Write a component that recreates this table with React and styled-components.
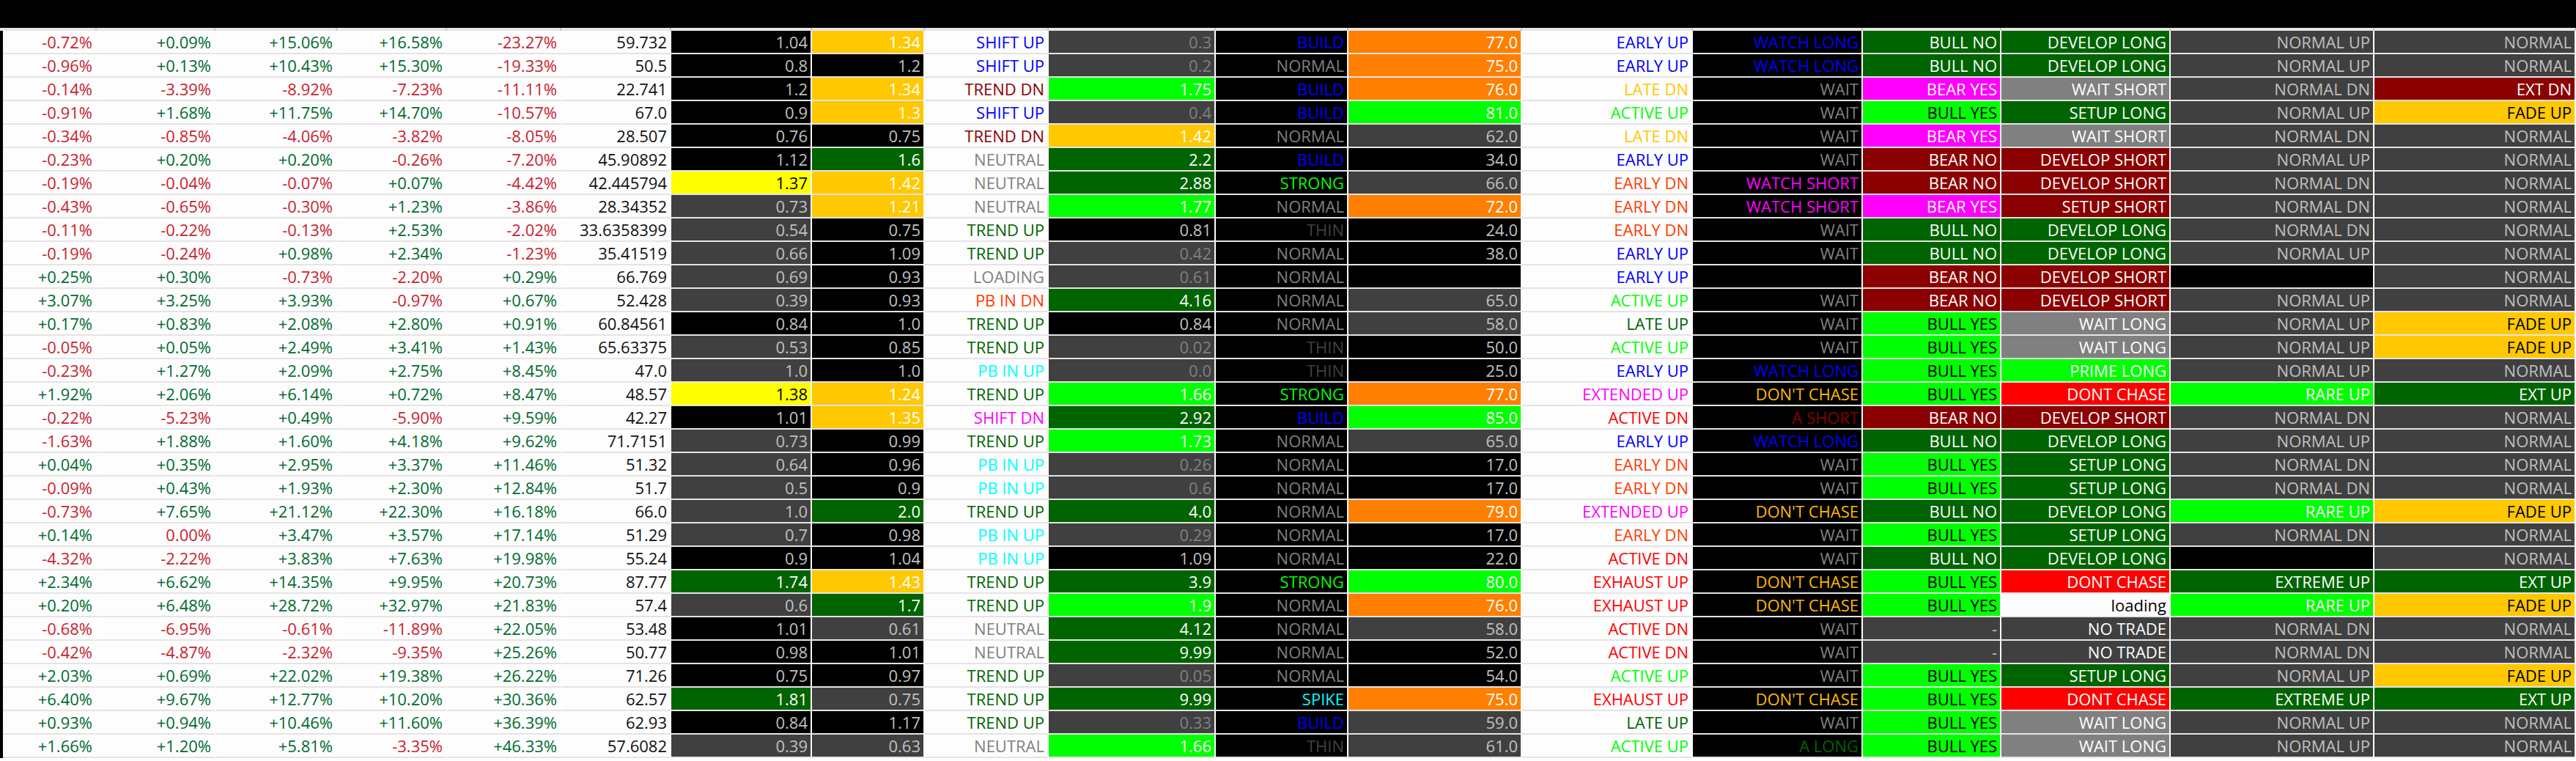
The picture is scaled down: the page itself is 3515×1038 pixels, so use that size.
import styled, { createGlobalStyle } from 'styled-components'

const GlobalStyle = createGlobalStyle`
  body {
    margin: 0;
    background: #fdfdfd;
    font-family: "Open Sans", "Liberation Sans", sans-serif;
  }
`

// column widths in px (first one excludes the 4px black strip on the left)
const COLS = [128, 162, 166, 150, 156, 150, 192, 154, 169, 228, 181, 237, 233, 232, 189, 231, 278, 275]
const bodyTemplate = COLS.map((w) => `${w}px`).join(' ')
const headTemplate = [COLS[0] + 4, ...COLS.slice(1)].map((w) => `${w}px`).join(' ')

const BG = {
  bk: '#000000',
  dg: '#404040',
  mg: '#808080',
  gold: '#ffc800',
  yel: '#ffff00',
  lime: '#00ff00',
  dgrn: '#006400',
  org: '#ff7f00',
  dred: '#8b0000',
  mag: '#ff00ff',
  red: '#ff0000',
  wh: '#fdfdfd',
}

const TXT = {
  blue: '#0000ff',
  dred: '#8b0000',
  gray: '#808080',
  dgreen: '#006400',
  cyan: '#00ffff',
  mag: '#ff00ff',
  ored: '#ff3c00',
  red: '#ff0000',
  gold: '#ffc800',
  amber: '#ffb900',
  lime: '#00ff00',
  dark: '#404040',
}

const TREND = {
  'SHIFT UP': TXT.blue,
  'TREND DN': TXT.dred,
  NEUTRAL: TXT.gray,
  'TREND UP': TXT.dgreen,
  LOADING: TXT.gray,
  'PB IN DN': TXT.ored,
  'PB IN UP': TXT.cyan,
  'SHIFT DN': TXT.mag,
}

const VOLUME = {
  BUILD: TXT.blue,
  NORMAL: TXT.gray,
  STRONG: TXT.lime,
  THIN: TXT.dark,
  SPIKE: TXT.cyan,
}

const PHASE = {
  'EARLY UP': TXT.blue,
  'LATE DN': TXT.gold,
  'ACTIVE UP': TXT.lime,
  'EARLY DN': TXT.ored,
  'LATE UP': TXT.dgreen,
  'EXTENDED UP': TXT.mag,
  'ACTIVE DN': TXT.red,
  'EXHAUST UP': TXT.red,
}

const WATCH = {
  'WATCH LONG': TXT.blue,
  WAIT: TXT.gray,
  'WATCH SHORT': TXT.mag,
  "DON'T CHASE": TXT.amber,
  'A SHORT': TXT.dred,
  'A LONG': TXT.dgreen,
  '': TXT.gray,
}

const BIAS = {
  'BULL NO': [BG.dgrn, '#fff'],
  'BEAR YES': [BG.mag, '#fff'],
  'BULL YES': [BG.lime, '#000'],
  'BEAR NO': [BG.dred, '#fff'],
  '-': [BG.dg, '#c0c0c0'],
}

const SETUP = {
  'DEVELOP LONG': [BG.dgrn, '#fff'],
  'WAIT SHORT': [BG.mg, '#fff'],
  'SETUP LONG': [BG.dgrn, '#fff'],
  'DEVELOP SHORT': [BG.dred, '#fff'],
  'SETUP SHORT': [BG.dred, '#fff'],
  'WAIT LONG': [BG.mg, '#fff'],
  'PRIME LONG': [BG.lime, '#fff'],
  'DONT CHASE': [BG.red, '#fff'],
  loading: [BG.wh, '#000'],
  'NO TRADE': [BG.dg, '#fff'],
}

const RANGE = {
  'NORMAL UP': [BG.dg, '#c0c0c0'],
  'NORMAL DN': [BG.dg, '#c0c0c0'],
  '': [BG.bk, '#c0c0c0'],
  'RARE UP': [BG.lime, '#fff'],
  'EXTREME UP': [BG.dgrn, '#fff'],
}

const STRETCH = {
  NORMAL: [BG.dg, '#c0c0c0'],
  'EXT DN': [BG.dred, '#fff'],
  'FADE UP': [BG.gold, '#000'],
  'EXT UP': [BG.dgrn, '#fff'],
}

const ROWS = [
  "-0.72%|+0.09%|+15.06%|+16.58%|-23.27%|59.732|1.04 bk|1.34 gold|SHIFT UP|0.3 dg|BUILD|77.0 org|EARLY UP|WATCH LONG|BULL NO|DEVELOP LONG|NORMAL UP|NORMAL",
  "-0.96%|+0.13%|+10.43%|+15.30%|-19.33%|50.5|0.8 bk|1.2 bk|SHIFT UP|0.2 dg|NORMAL|75.0 org|EARLY UP|WATCH LONG|BULL NO|DEVELOP LONG|NORMAL UP|NORMAL",
  "-0.14%|-3.39%|-8.92%|-7.23%|-11.11%|22.741|1.2 bk|1.34 gold|TREND DN|1.75 lime|BUILD|76.0 org|LATE DN|WAIT|BEAR YES|WAIT SHORT|NORMAL DN|EXT DN",
  "-0.91%|+1.68%|+11.75%|+14.70%|-10.57%|67.0|0.9 bk|1.3 gold|SHIFT UP|0.4 dg|BUILD|81.0 lime|ACTIVE UP|WAIT|BULL YES|SETUP LONG|NORMAL UP|FADE UP",
  "-0.34%|-0.85%|-4.06%|-3.82%|-8.05%|28.507|0.76 bk|0.75 bk|TREND DN|1.42 gold|NORMAL|62.0 dg|LATE DN|WAIT|BEAR YES|WAIT SHORT|NORMAL DN|NORMAL",
  "-0.23%|+0.20%|+0.20%|-0.26%|-7.20%|45.90892|1.12 bk|1.6 dgrn|NEUTRAL|2.2 dgrn|BUILD|34.0 bk|EARLY UP|WAIT|BEAR NO|DEVELOP SHORT|NORMAL UP|NORMAL",
  "-0.19%|-0.04%|-0.07%|+0.07%|-4.42%|42.445794|1.37 yel|1.42 gold|NEUTRAL|2.88 dgrn|STRONG|66.0 dg|EARLY DN|WATCH SHORT|BEAR NO|DEVELOP SHORT|NORMAL DN|NORMAL",
  "-0.43%|-0.65%|-0.30%|+1.23%|-3.86%|28.34352|0.73 dg|1.21 gold|NEUTRAL|1.77 lime|NORMAL|72.0 org|EARLY DN|WATCH SHORT|BEAR YES|SETUP SHORT|NORMAL DN|NORMAL",
  "-0.11%|-0.22%|-0.13%|+2.53%|-2.02%|33.6358399|0.54 dg|0.75 bk|TREND UP|0.81 bk|THIN|24.0 bk|EARLY DN|WAIT|BULL NO|DEVELOP LONG|NORMAL DN|NORMAL",
  "-0.19%|-0.24%|+0.98%|+2.34%|-1.23%|35.41519|0.66 dg|1.09 bk|TREND UP|0.42 dg|NORMAL|38.0 bk|EARLY UP|WAIT|BULL NO|DEVELOP LONG|NORMAL UP|NORMAL",
  "+0.25%|+0.30%|-0.73%|-2.20%|+0.29%|66.769|0.69 dg|0.93 bk|LOADING|0.61 dg|NORMAL| bk|EARLY UP||BEAR NO|DEVELOP SHORT||NORMAL",
  "+3.07%|+3.25%|+3.93%|-0.97%|+0.67%|52.428|0.39 dg|0.93 bk|PB IN DN|4.16 dgrn|NORMAL|65.0 dg|ACTIVE UP|WAIT|BEAR NO|DEVELOP SHORT|NORMAL UP|NORMAL",
  "+0.17%|+0.83%|+2.08%|+2.80%|+0.91%|60.84561|0.84 bk|1.0 bk|TREND UP|0.84 bk|NORMAL|58.0 dg|LATE UP|WAIT|BULL YES|WAIT LONG|NORMAL UP|FADE UP",
  "-0.05%|+0.05%|+2.49%|+3.41%|+1.43%|65.63375|0.53 dg|0.85 bk|TREND UP|0.02 dg|THIN|50.0 bk|ACTIVE UP|WAIT|BULL YES|WAIT LONG|NORMAL UP|FADE UP",
  "-0.23%|+1.27%|+2.09%|+2.75%|+8.45%|47.0|1.0 dg|1.0 bk|PB IN UP|0.0 dg|THIN|25.0 bk|EARLY UP|WATCH LONG|BULL YES|PRIME LONG|NORMAL UP|NORMAL",
  "+1.92%|+2.06%|+6.14%|+0.72%|+8.47%|48.57|1.38 yel|1.24 gold|TREND UP|1.66 lime|STRONG|77.0 org|EXTENDED UP|DON'T CHASE|BULL YES|DONT CHASE|RARE UP|EXT UP",
  "-0.22%|-5.23%|+0.49%|-5.90%|+9.59%|42.27|1.01 bk|1.35 gold|SHIFT DN|2.92 dgrn|BUILD|85.0 lime|ACTIVE DN|A SHORT|BEAR NO|DEVELOP SHORT|NORMAL DN|NORMAL",
  "-1.63%|+1.88%|+1.60%|+4.18%|+9.62%|71.7151|0.73 dg|0.99 bk|TREND UP|1.73 lime|NORMAL|65.0 dg|EARLY UP|WATCH LONG|BULL NO|DEVELOP LONG|NORMAL UP|NORMAL",
  "+0.04%|+0.35%|+2.95%|+3.37%|+11.46%|51.32|0.64 dg|0.96 bk|PB IN UP|0.26 dg|NORMAL|17.0 bk|EARLY DN|WAIT|BULL YES|SETUP LONG|NORMAL DN|NORMAL",
  "-0.09%|+0.43%|+1.93%|+2.30%|+12.84%|51.7|0.5 dg|0.9 bk|PB IN UP|0.6 dg|NORMAL|17.0 bk|EARLY DN|WAIT|BULL YES|SETUP LONG|NORMAL DN|NORMAL",
  "-0.73%|+7.65%|+21.12%|+22.30%|+16.18%|66.0|1.0 dg|2.0 dgrn|TREND UP|4.0 dgrn|NORMAL|79.0 org|EXTENDED UP|DON'T CHASE|BULL NO|DEVELOP LONG|RARE UP|FADE UP",
  "+0.14%|0.00%|+3.47%|+3.57%|+17.14%|51.29|0.7 dg|0.98 bk|PB IN UP|0.29 dg|NORMAL|17.0 bk|EARLY DN|WAIT|BULL YES|SETUP LONG|NORMAL DN|NORMAL",
  "-4.32%|-2.22%|+3.83%|+7.63%|+19.98%|55.24|0.9 bk|1.04 bk|PB IN UP|1.09 bk|NORMAL|22.0 bk|ACTIVE DN|WAIT|BULL NO|DEVELOP LONG||NORMAL",
  "+2.34%|+6.62%|+14.35%|+9.95%|+20.73%|87.77|1.74 dgrn|1.43 gold|TREND UP|3.9 dgrn|STRONG|80.0 lime|EXHAUST UP|DON'T CHASE|BULL YES|DONT CHASE|EXTREME UP|EXT UP",
  "+0.20%|+6.48%|+28.72%|+32.97%|+21.83%|57.4|0.6 dg|1.7 dgrn|TREND UP|1.9 lime|NORMAL|76.0 org|EXHAUST UP|DON'T CHASE|BULL YES|loading|RARE UP|FADE UP",
  "-0.68%|-6.95%|-0.61%|-11.89%|+22.05%|53.48|1.01 bk|0.61 dg|NEUTRAL|4.12 dgrn|NORMAL|58.0 dg|ACTIVE DN|WAIT|-|NO TRADE|NORMAL DN|NORMAL",
  "-0.42%|-4.87%|-2.32%|-9.35%|+25.26%|50.77|0.98 bk|1.01 bk|NEUTRAL|9.99 dgrn|NORMAL|52.0 bk|ACTIVE DN|WAIT|-|NO TRADE|NORMAL DN|NORMAL",
  "+2.03%|+0.69%|+22.02%|+19.38%|+26.22%|71.26|0.75 bk|0.97 bk|TREND UP|0.05 dg|NORMAL|54.0 bk|ACTIVE UP|WAIT|BULL YES|SETUP LONG|NORMAL UP|FADE UP",
  "+6.40%|+9.67%|+12.77%|+10.20%|+30.36%|62.57|1.81 dgrn|0.75 dg|TREND UP|9.99 dgrn|SPIKE|75.0 org|EXHAUST UP|DON'T CHASE|BULL YES|DONT CHASE|EXTREME UP|EXT UP",
  "+0.93%|+0.94%|+10.46%|+11.60%|+36.39%|62.93|0.84 bk|1.17 bk|TREND UP|0.33 dg|BUILD|59.0 dg|LATE UP|WAIT|BULL YES|WAIT LONG|NORMAL UP|NORMAL",
  "+1.66%|+1.20%|+5.81%|-3.35%|+46.33%|57.6082|0.39 dg|0.63 dg|NEUTRAL|1.66 lime|THIN|61.0 dg|ACTIVE UP|A LONG|BULL YES|WAIT LONG|NORMAL UP|NORMAL",
]

// number on a coloured background: "1.04 bk" -> value + background
const splitNum = (s) => {
  const i = s.lastIndexOf(' ')
  return [s.slice(0, i), s.slice(i + 1)]
}

const numFg = (bg, dim) => {
  if (bg === 'yel') return '#000'
  if (bg === 'bk') return '#c0c0c0'
  if (bg === 'dg') return dim ? '#808080' : '#c0c0c0'
  return '#fff'
}

const buildCells = (line) => {
  const f = line.split('|')
  const cells = []
  for (let i = 0; i < 5; i++) {
    cells.push({ text: f[i], bg: BG.wh, fg: f[i].startsWith('+') ? '#006b31' : '#c8232f' })
  }
  cells.push({ text: f[5], bg: BG.wh, fg: '#111' })
  const num = (s, dim) => {
    const [v, b] = splitNum(s)
    return { text: v, bg: BG[b], fg: numFg(b, dim) }
  }
  cells.push(num(f[6]))
  cells.push(num(f[7]))
  cells.push({ text: f[8], bg: BG.wh, fg: TREND[f[8]] })
  cells.push(num(f[9], true))
  cells.push({ text: f[10], bg: BG.bk, fg: VOLUME[f[10]] })
  cells.push(num(f[11]))
  cells.push({ text: f[12], bg: BG.wh, fg: PHASE[f[12]] })
  cells.push({ text: f[13], bg: BG.bk, fg: WATCH[f[13]] })
  const pair = (map, s) => ({ text: s, bg: map[s][0], fg: map[s][1] })
  cells.push(pair(BIAS, f[14]))
  cells.push(pair(SETUP, f[15]))
  cells.push(pair(RANGE, f[16]))
  cells.push(pair(STRETCH, f[17]))
  return cells
}

const App = () => {
  return (
    <Sheet>
      <GlobalStyle />
      <HeadRow>
        {COLS.map((w, i) => (
          <HeadCell key={i}>
            <HeadTop />
            <HeadRule />
          </HeadCell>
        ))}
      </HeadRow>
      <Body>
        {ROWS.map((line, r) => (
          <Row key={r}>
            {buildCells(line).map((c, i) => (
              <Cell key={i} $bg={c.bg} $fg={c.fg}>
                {c.text}
              </Cell>
            ))}
          </Row>
        ))}
      </Body>
    </Sheet>
  )
}

export default App

const Sheet = styled.div`
  width: 3515px;
  background: #fdfdfd;
  padding-bottom: 4px;
`

const HeadRow = styled.div`
  display: grid;
  grid-template-columns: ${headTemplate};
`

const HeadCell = styled.div`
  display: flex;
  flex-direction: column;
`

const HeadTop = styled.div`
  height: 38px;
  background: #000;
`

const HeadRule = styled.div`
  height: 4px;
  background: #e6e6e6;
  border-right: 2px solid #c8c8c8;
`

const Body = styled.div`
  border-left: 4px solid #000;
`

const Row = styled.div`
  display: grid;
  grid-template-columns: ${bodyTemplate};
`

const Cell = styled.div`
  height: 30px;
  padding-right: 4px;
  border-right: 2px solid #fdfdfd;
  border-bottom: 2px solid #e4e4e4;
  background: ${(p) => p.$bg};
  color: ${(p) => p.$fg};
  font-size: 22px;
  font-weight: 400;
  line-height: 30px;
  text-align: right;
  white-space: nowrap;
  overflow: hidden;
`
